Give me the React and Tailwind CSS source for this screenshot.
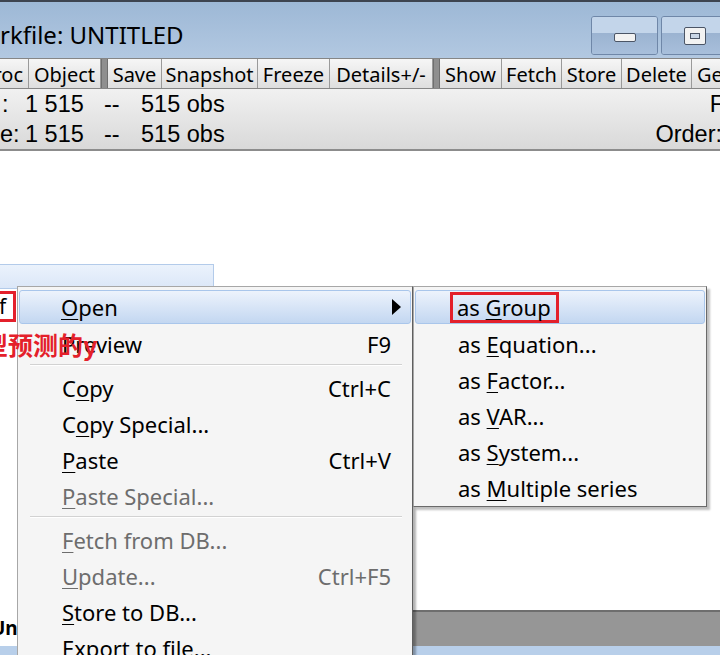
const ui = { fontFamily: '"Noto Sans", "Open Sans", sans-serif' }

const tools = [
  { t: 'roc', w: 29, align: 'justify-end pr-[5px]' },
  { t: 'Object', w: 72 },
  { sep: true },
  { t: 'Save', w: 54 },
  { t: 'Snapshot', w: 96 },
  { t: 'Freeze', w: 72 },
  { t: 'Details+/-', w: 103 },
  { sep: true },
  { t: 'Show', w: 62 },
  { t: 'Fetch', w: 60 },
  { t: 'Store', w: 60 },
  { t: 'Delete', w: 70 },
  { t: 'Ge', w: 40, align: 'justify-start pl-[5px]' },
]

// menu rows: parts = [before, underlined, after]
const menu = [
  { parts: ['', 'O', 'pen'], active: true, arrow: true },
  { parts: ['Preview', '', ''], key: 'F9' },
  { sep: true },
  { parts: ['C', 'o', 'py'], key: 'Ctrl+C' },
  { parts: ['C', 'o', 'py Special...'] },
  { parts: ['', 'P', 'aste'], key: 'Ctrl+V' },
  { parts: ['', 'P', 'aste Special...'], off: true },
  { sep: true },
  { parts: ['', 'F', 'etch from DB...'], off: true },
  { parts: ['', 'U', 'pdate...'], key: 'Ctrl+F5', off: true },
  { parts: ['', 'S', 'tore to DB...'] },
  { parts: ['', 'E', 'xport to file...'] },
]

const sub = [
  ['as ', 'G', 'roup'],
  ['as ', 'E', 'quation...'],
  ['as ', 'F', 'actor...'],
  ['as ', 'V', 'AR...'],
  ['as ', 'S', 'ystem...'],
  ['as ', 'M', 'ultiple series'],
]

function Label({ parts }) {
  return (
    <span className="whitespace-pre">
      {parts[0]}
      {parts[1] && <span className="underline decoration-1 underline-offset-[3px]">{parts[1]}</span>}
      {parts[2]}
    </span>
  )
}

function WinButton({ children }) {
  return (
    <div className="relative shrink-0 w-[67px] h-[39px] rounded-[3px] border border-[#6f87a8] overflow-hidden flex flex-col">
      <div className="h-[16px] bg-[#c3d5ea]" />
      <div className="flex-1 bg-gradient-to-b from-[#9bb3d1] to-[#a8bfdb]" />
      <div className="absolute inset-0 flex items-center justify-center">{children}</div>
    </div>
  )
}

export default function App() {
  return (
    <div className="relative w-[720px] h-[655px] overflow-hidden bg-white flex flex-col" style={ui}>
      {/* Title bar */}
      <div className="h-[58px] shrink-0 border-t-2 border-[#3d4450] bg-gradient-to-b from-[#9db8d6] to-[#b2c8e1] flex items-start">
        <div className="pt-[18px] text-[24px] leading-[30px] text-black whitespace-nowrap">rkfile: UNTITLED</div>
        <div className="ml-auto pt-[14px] flex gap-[3px] -mr-[8px]">
          <WinButton>
            <div className="w-[22px] h-[9px] rounded-[2px] border border-[#4b5566] bg-[#f2f2f2] mt-[4px]" />
          </WinButton>
          <WinButton>
            <div className="w-[22px] h-[18px] rounded-[2px] border border-[#4b5566] bg-[#f2f2f2] flex items-center justify-center">
              <div className="w-[10px] h-[6px] border border-[#4b5566] bg-[#c9d6e6]" />
            </div>
          </WinButton>
        </div>
      </div>

      {/* Toolbar */}
      <div className="h-[31px] shrink-0 flex border-t border-b border-[#868686] bg-[#e6e6e6] text-[20px] text-black whitespace-nowrap">
        {tools.map((b, i) =>
          b.sep ? (
            <div key={i} className="w-[7px] shrink-0 bg-[#8f8f8f] border-x border-[#6f6f6f]" />
          ) : (
            <div
              key={i}
              style={{ width: b.w }}
              className={`shrink-0 flex items-center ${b.align || 'justify-center'} border-r border-[#9a9a9a] bg-gradient-to-b from-[#f6f6f6] to-[#dedede] leading-none pt-[2px]`}
            >
              {b.t}
            </div>
          )
        )}
      </div>

      {/* Range / sample info */}
      <div
        className="h-[62px] shrink-0 border-b-2 border-[#8c8c8c] bg-gradient-to-b from-[#f1f1f1] to-[#d9d9d9] text-[23.5px] leading-[30px] text-black"
        style={{ fontFamily: '"Liberation Sans", Arial, sans-serif' }}
      >
        <div className="flex whitespace-pre">
          <span className="w-[25px] pl-[2px]">:</span>
          <span className="w-[79px]">1 515</span>
          <span className="w-[37px]">--</span>
          <span>515 obs</span>
          <span className="ml-auto -mr-[4px]">F</span>
        </div>
        <div className="flex whitespace-pre">
          <span className="w-[25px]">e:</span>
          <span className="w-[79px]">1 515</span>
          <span className="w-[37px]">--</span>
          <span>515 obs</span>
          <span className="ml-auto -mr-[2px]">Order:</span>
        </div>
      </div>

      {/* Workfile list area */}
      <div className="h-[459px] shrink-0 bg-white">
        <div className="mt-[113px] h-[25px] w-[214px] border border-l-0 border-[#b3cbea] bg-gradient-to-b from-[#ebf2fc] to-[#dbe7f8]" />
        <div className="mt-[2px] h-[31px] w-[16px] border-[3px] border-l-0 border-[#e3202b] flex items-center text-[21px] leading-none">
          <span className="-ml-[1px]">f</span>
        </div>
      </div>

      {/* bottom band */}
      <div className="h-[36px] shrink-0 flex">
        <div className="w-[17px] bg-white flex items-center overflow-hidden">
          <span className="-ml-[9px] text-[19px] font-bold leading-none">Un</span>
        </div>
        <div className="flex-1 bg-[#969696] border-t-2 border-[#6e6e6e]" />
      </div>
      <div className="flex-1 bg-[#b8cfea]" />

      {/* Context menu */}
      <div className="absolute left-[17px] top-[286px] w-[396px] h-[400px] bg-[#f5f5f5] border border-[#a7a7a7] border-r-[#5f5f5f] shadow-[3px_3px_2px_rgba(0,0,0,0.3)] pt-[3px] text-[22px]">
        {menu.map((m, i) =>
          m.sep ? (
            <div key={i} className="h-[8px] pt-[2px] ml-[12px] mr-[10px]">
              <div className="h-px bg-[#d2d2d2]" />
              <div className="h-px bg-white" />
            </div>
          ) : (
            <div
              key={i}
              className={`relative flex items-center pr-[21px] ${
                m.active
                  ? 'h-[34px] mb-[2px] mx-[1px] pl-[41px] rounded-[3px] border border-[#a9c6eb] bg-gradient-to-b from-[#edf3fc] to-[#c3d7f1]'
                  : 'h-[36px] pl-[44px]'
              } ${m.off ? 'text-[#6d6d6d]' : 'text-black'}`}
            >
              <Label parts={m.parts} />
              {m.key && <span className="ml-auto">{m.key}</span>}
              {m.arrow && (
                <svg className="ml-auto mr-[-12px]" width="9" height="16" viewBox="0 0 9 16">
                  <path d="M0 0 L9 8 L0 16 Z" fill="#000" />
                </svg>
              )}
            </div>
          )
        )}
      </div>

      {/* Submenu */}
      <div className="absolute left-[413px] top-[286px] w-[294px] h-[221px] bg-[#f5f5f5] border border-[#a7a7a7] border-r-[#6a6a6a] border-b-[#6a6a6a] shadow-[3px_3px_2px_rgba(0,0,0,0.25)] pt-[3px] text-[22px] text-black">
        {sub.map((p, i) =>
          i === 0 ? (
            <div key={i} className="h-[34px] mb-[2px] mx-[1px] rounded-[3px] border border-[#a9c6eb] bg-gradient-to-b from-[#edf3fc] to-[#c3d7f1] flex items-center pl-[34px]">
              <span className="h-[31px] flex items-center border-[3px] border-[#e3202b] pl-[4px] pr-[5px]">
                <Label parts={p} />
              </span>
            </div>
          ) : (
            <div key={i} className="h-[36px] flex items-center pl-[44px]">
              <Label parts={p} />
            </div>
          )
        )}
      </div>

      {/* red annotation */}
      <div
        className="absolute left-[-17px] top-[328px] text-[25px] font-bold leading-[32px] text-[#e4202a] whitespace-nowrap"
        style={{ fontFamily: '"Noto Sans CJK SC", "Noto Sans", sans-serif' }}
      >
        型预测的y
      </div>
    </div>
  )
}
